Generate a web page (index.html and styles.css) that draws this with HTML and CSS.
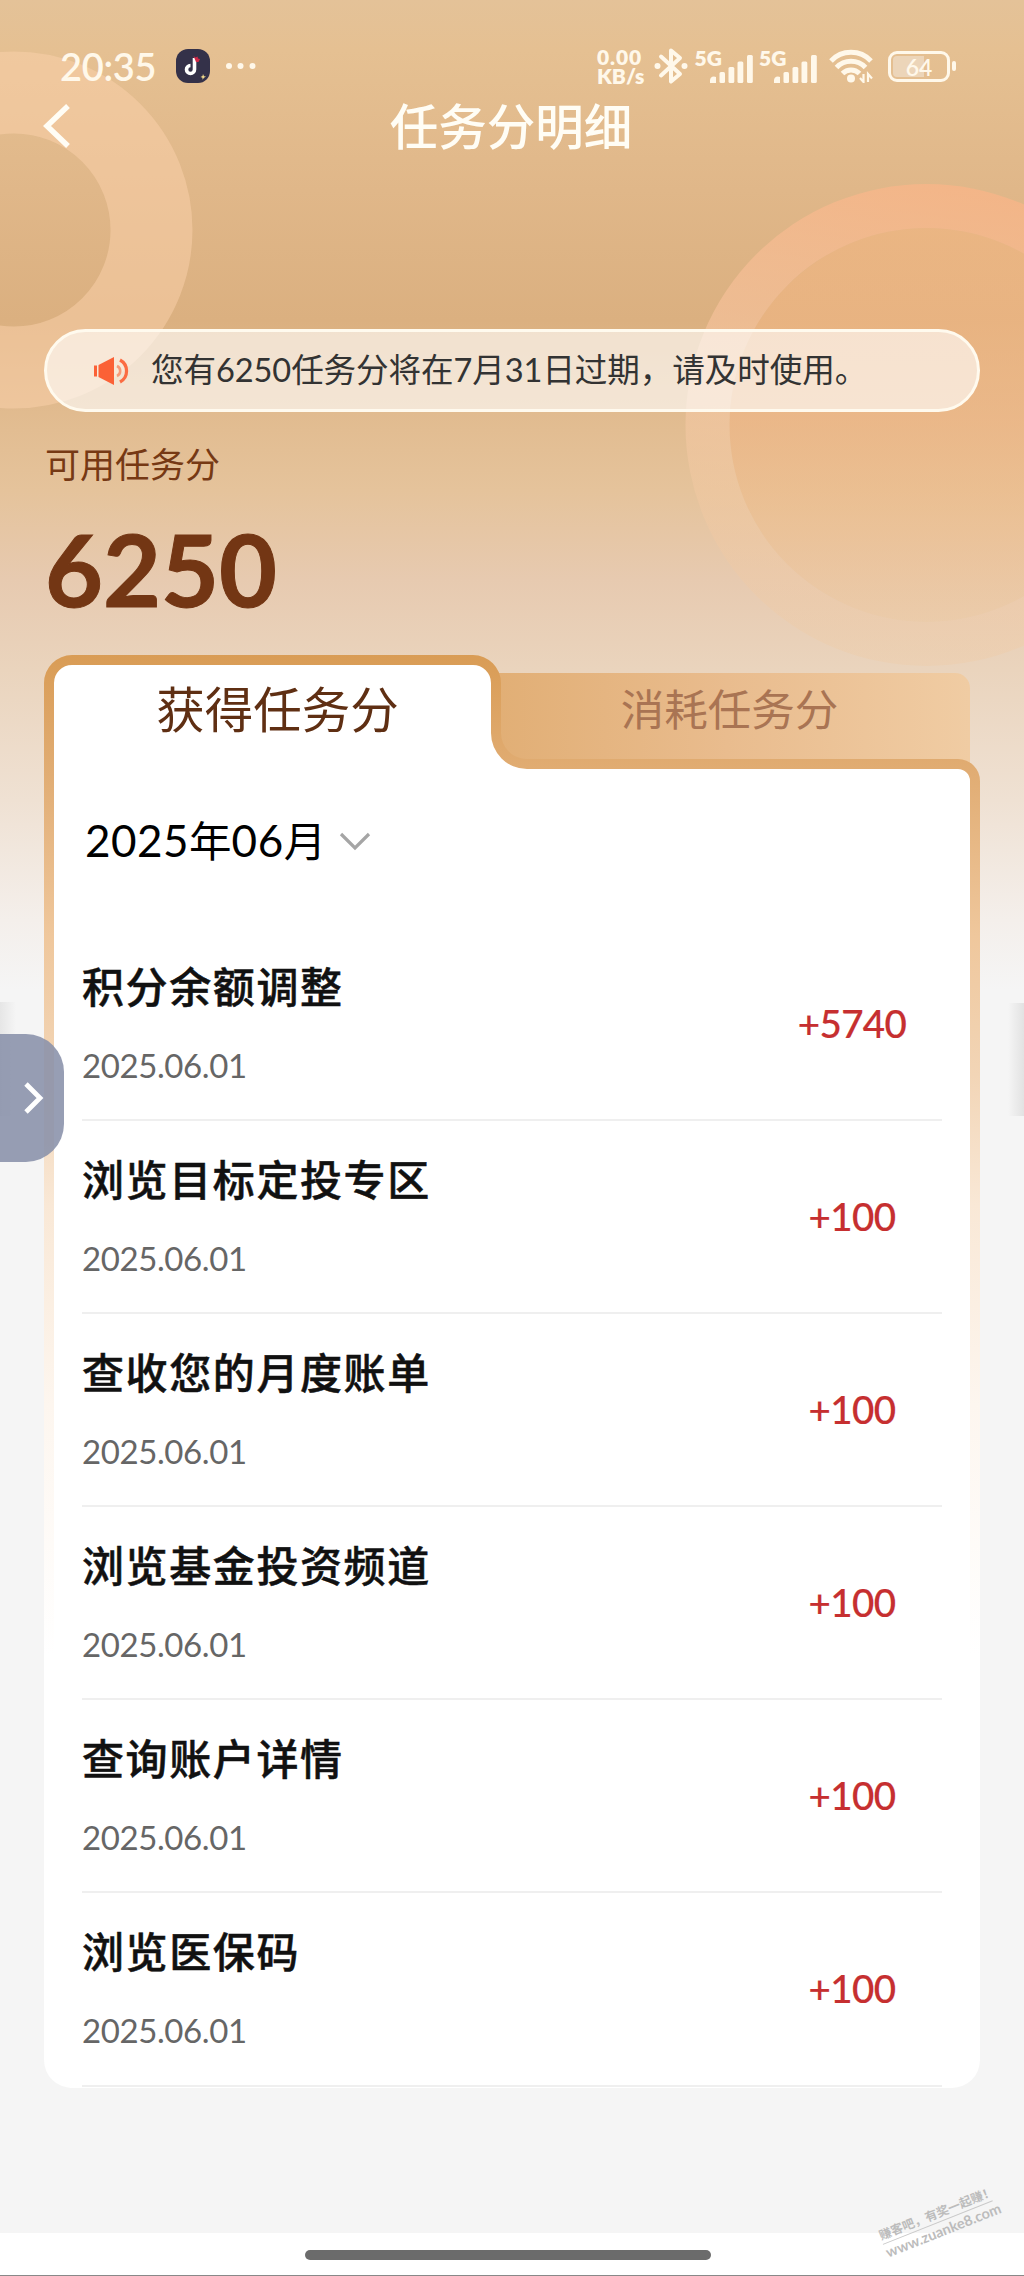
FILE: index.html
```html
<!DOCTYPE html>
<html lang="zh-CN">
<head>
<meta charset="utf-8">
<title>任务分明细</title>
<link rel="stylesheet" href="styles.css">
</head>
<body>
<div class="page">
  <svg class="rings" width="1024" height="700" viewBox="0 0 1024 700" aria-hidden="true">
    <defs>
      <linearGradient id="ring" x1="0.6" y1="0" x2="0.4" y2="1">
        <stop offset="0" stop-color="#ffb487" stop-opacity=".62"/>
        <stop offset=".5" stop-color="#fccdac" stop-opacity=".5"/>
        <stop offset="1" stop-color="#f0c89c" stop-opacity=".25"/>
      </linearGradient>
      <linearGradient id="disc" x1="0" y1="0" x2="0" y2="1">
        <stop offset="0" stop-color="#f2b681" stop-opacity=".6"/>
        <stop offset=".5" stop-color="#f0b584" stop-opacity=".6"/>
        <stop offset="1" stop-color="#f1c48f" stop-opacity=".3"/>
      </linearGradient>
    </defs>
    <circle cx="14" cy="230" r="137.5" fill="none" stroke="#fbd2ab" stroke-opacity=".5" stroke-width="82"/>
    <circle cx="926.5" cy="425" r="197" fill="url(#disc)"/>
    <path fill="url(#ring)" fill-rule="evenodd" d="M685.500 425a241 241 0 1 1 482 0a241 241 0 1 1-482 0ZM729.500 425a197 197 0 1 0 394 0a197 197 0 1 0-394 0Z"/>
  </svg>

  <header class="status">
    <span class="clock">20:35</span>
    <svg class="app" viewBox="0 0 34 34"><rect width="34" height="34" rx="12" fill="#343149"/><path d="M18.500 9v11.500a4 4 0 1 1-4-4" fill="none" stroke="#fff" stroke-width="3.600"/><path d="M17.500 7l2 1.500 2-1 .5 2 2 .5-1.500 3h-2.500z" fill="#cf2747"/><path d="M27 25l1 2.200 2 .2-2 1.300-1.500 2v-2l-2-.8 2-1z" fill="#f4dc8d"/></svg>
    <svg class="dots" viewBox="0 0 32 8"><g fill="#fff8ea"><circle cx="4" cy="4" r="3"/><circle cx="15.500" cy="4" r="3"/><circle cx="27.500" cy="4" r="3"/></g></svg>
    <span class="speed">0.00<br>KB/s</span>
    <svg class="bt" viewBox="0 0 34 38"><g fill="none" stroke="#fff8ea" stroke-width="4" stroke-linejoin="round" stroke-linecap="round"><path d="M7 9.500L26 27 17 34.500V3.500L26 11 7 28.500"/></g><circle cx="3.500" cy="19" r="3" fill="#fff8ea"/><circle cx="30.500" cy="19" r="3" fill="#fff8ea"/></svg>
    <span class="net"><b>5G</b><svg viewBox="0 0 44 28"><g fill="#fff8ea"><path d="M1 25a4 4 0 0 1 6-3v6H1z"/><rect x="10.500" y="17" width="5.500" height="11" rx="1.500"/><rect x="19.500" y="12" width="5.800" height="16" rx="1.500"/><rect x="28.500" y="6.500" width="5.800" height="21.500" rx="1.500"/><rect x="38" y="0" width="5.800" height="28" rx="1.500"/></g></svg></span>
    <span class="net"><b>5G</b><svg viewBox="0 0 44 28"><g fill="#fff8ea"><path d="M1 25a4 4 0 0 1 6-3v6H1z"/><rect x="10.500" y="17" width="5.500" height="11" rx="1.500"/><rect x="19.500" y="12" width="5.800" height="16" rx="1.500"/><rect x="28.500" y="6.500" width="5.800" height="21.500" rx="1.500"/><rect x="38" y="0" width="5.800" height="28" rx="1.500"/></g></svg></span>
    <svg class="wifi" viewBox="0 0 44 34"><g fill="none" stroke="#fff8ea" stroke-width="5"><path d="M2 12a27.500 27.500 0 0 1 40 0"/><path d="M7.500 18.500a20 20 0 0 1 29 0"/><path d="M13.500 24.500a12 12 0 0 1 17 0"/></g><circle cx="22" cy="29.500" r="4" fill="#fff8ea"/><path d="M34.500 25v8l-3.500-4M39 33v-8l4 4.500" fill="none" stroke="#fff8ea" stroke-width="2.200"/></svg>
    <span class="battery"><span class="cell">64</span><i></i></span>
  </header>

  <nav class="nav">
    <svg class="back" viewBox="0 0 28 44"><path d="M25 2L4 22l21 20" fill="none" stroke="#fffdf5" stroke-width="5.500"/></svg>
    <h1>任务分明细</h1>
  </nav>

  <div class="notice">
    <svg viewBox="0 0 36 30"><path d="M1 9.500h3v11H1zM5.500 9L21 1v28L5.500 21z" fill="#fb6136"/><path d="M24 10a5.500 5.500 0 0 1 0 10" fill="none" stroke="#f79a78" stroke-width="2.600"/><path d="M27 4a12.500 12.500 0 0 1 0 22" fill="none" stroke="#fb6c43" stroke-width="3.200"/></svg>
    <span>您有6250任务分将在7月31日过期，请及时使用。</span>
  </div>

  <div class="balance-label">可用任务分</div>
  <div class="balance">6250</div>

  <main class="card">
    <svg class="frame" width="936" height="1433" viewBox="0 0 936 1433" aria-hidden="true">
      <defs>
        <linearGradient id="edge" gradientUnits="userSpaceOnUse" x1="0" y1="0" x2="0" y2="1000">
          <stop offset="0" stop-color="#d99c55"/>
          <stop offset=".12" stop-color="#e1ad74"/>
          <stop offset=".28" stop-color="#efc79c"/>
          <stop offset=".42" stop-color="#f2d5b6"/>
          <stop offset=".55" stop-color="#f9e8d6"/>
          <stop offset=".75" stop-color="#fdf6ef"/>
          <stop offset="1" stop-color="#fff"/>
        </linearGradient>
        <linearGradient id="tab" x1="0" y1="0" x2="1" y2="0">
          <stop offset="0" stop-color="#e1ae74"/>
          <stop offset=".5" stop-color="#e9bc8e"/>
          <stop offset="1" stop-color="#f0cca3"/>
        </linearGradient>
      </defs>
      <path d="M440 18H911a15 15 0 0 1 15 15V114H440Z" fill="url(#tab)"/>
      <path d="M0 28A28 28 0 0 1 28 0H429A28 28 0 0 1 457 28V78A26 26 0 0 0 483 104H914A22 22 0 0 1 936 126V1405A28 28 0 0 1 908 1433H28A28 28 0 0 1 0 1405Z" fill="url(#edge)"/>
      <path d="M10 28A18 18 0 0 1 28 10H429A18 18 0 0 1 447 28V78A36 36 0 0 0 483 114H914A12 12 0 0 1 926 126V1405A28 28 0 0 1 908 1433H28A18 28 0 0 1 10 1405Z" fill="#fff"/>
    </svg>
    <div class="tabs"><div class="tab active">获得任务分</div><div class="tab">消耗任务分</div></div>
    <div class="month"><span><b>2025</b>年<b>06</b>月</span><svg viewBox="0 0 32 20"><path d="M2 2l14 14L30 2" fill="none" stroke="#a5a5a5" stroke-width="3.200"/></svg></div>
    <ul class="list">
      <li><div><h2>积分余额调整</h2><time>2025.06.01</time></div><strong>+5740</strong></li>
      <li><div><h2>浏览目标定投专区</h2><time>2025.06.01</time></div><strong>+100</strong></li>
      <li><div><h2>查收您的月度账单</h2><time>2025.06.01</time></div><strong>+100</strong></li>
      <li><div><h2>浏览基金投资频道</h2><time>2025.06.01</time></div><strong>+100</strong></li>
      <li><div><h2>查询账户详情</h2><time>2025.06.01</time></div><strong>+100</strong></li>
      <li><div><h2>浏览医保码</h2><time>2025.06.01</time></div><strong>+100</strong></li>
    </ul>
  </main>

  <footer class="home"><span></span></footer>

  <div class="shade left"></div>
  <div class="shade right"></div>
  <div class="handle"><svg viewBox="0 0 22 32"><path d="M3 2l14 14L3 30" fill="none" stroke="#fff" stroke-width="4.800"/></svg></div>
  <div class="watermark"><span class="wm-cn">赚客吧，有奖一起赚！</span><span class="wm-url">www.zuanke8.com</span></div>
</div>
</body>
</html>
```
FILE: styles.css
```css
* { box-sizing: border-box; margin: 0; padding: 0; }
body { background: #f5f5f5; font-family: Lato, "Noto Sans CJK SC", sans-serif; }
.page {
  position: relative;
  width: 1024px;
  height: 2276px;
  overflow: hidden;
  display: flex;
  flex-direction: column;
  background: linear-gradient(#e4c298 0, #e5c092 50px, #e0b789 190px, #dbb080 320px, #e2bd92 430px, #e5c39b 490px, #e7cab0 580px, #ead4bd 670px, #efe1d3 800px, #f4efeb 920px, #f5f5f5 990px);
}
.page > * { flex-shrink: 0; position: relative; }
.page > .rings { position: absolute; left: 0; top: 0; }

.status { height: 92px; padding: 40px 0 0 60px; display: flex; align-items: center; color: #fff8ea; }
.clock { width: 116px; font-size: 38px; font-weight: 600; line-height: 50px; letter-spacing: -.3px; }
.app { width: 34px; height: 34px; }
.dots { width: 32px; height: 8px; margin-left: 15px; }
.speed { width: 58px; margin-left: 340px; font-size: 21px; font-weight: 800; line-height: 19.5px; white-space: nowrap; }
.speed::first-line { letter-spacing: .9px; }
.bt { width: 34px; height: 38px; margin-left: -1px; }
.net { position: relative; display: flex; align-items: flex-end; justify-content: flex-end; width: 59px; height: 34px; margin-left: 5.5px; }
.net b { position: absolute; left: 1px; top: -3px; font-size: 21px; line-height: 24px; font-weight: 800; }
.net svg { width: 44px; height: 28px; }
.wifi { width: 44px; height: 34px; margin-left: 12px; }
.battery { display: flex; align-items: center; gap: 2px; margin-left: 15px; }
.cell { width: 62px; height: 31px; border: 3px solid #fff8ea; border-radius: 9px; background: linear-gradient(90deg, #ecd5b9 60%, transparent 60%) content-box; padding: 2px; text-align: center; font-size: 23px; font-weight: 600; line-height: 22px; }
.battery i { width: 4px; height: 10px; border-radius: 2px; background: #fff8ea; }

.nav { height: 237px; padding: 0 45px 0 43px; display: grid; grid-template-columns: 28px 1fr 28px; align-items: start; }
.back { width: 28px; height: 44px; margin-top: 12px; }
.nav h1 { text-align: center; font-size: 48.5px; line-height: 68px; font-weight: 500; color: #fffdf5; }

.notice { height: 83px; margin: 0 44px; padding: 0 0 2px 46px; border: 3px solid #fffaee; border-radius: 42px; background: rgba(255,255,255,.62); display: flex; align-items: center; }
.notice svg { width: 36px; height: 30px; margin-top: 2px; }
.notice span { margin-left: 22px; font-size: 32.6px; letter-spacing: -.1px; line-height: 48px; color: #333; white-space: nowrap; }

.balance-label { height: 90px; padding: 27px 0 0 45px; font-size: 35px; line-height: 50px; color: #763914; }
.balance { height: 153px; padding-left: 45px; font-size: 100px; line-height: 132px; font-weight: 700; color: #733614; -webkit-text-stroke: 1px #733614; }

.card { width: 936px; height: 1433px; margin-left: 44px; }
.frame { position: absolute; left: 0; top: 0; }
.tabs { position: relative; display: flex; height: 114px; }
.tab { width: 457px; padding-top: 18px; text-align: center; font-size: 43.5px; line-height: 72px; color: #a97453; }
.tab.active { padding-left: 10px; font-size: 48.5px; color: #5f2f13; }
.month { position: relative; display: flex; align-items: center; height: 159px; padding: 0 0 16px 41px; font-size: 42.5px; line-height: 60px; color: #000; }
.month b { font-weight: 400; font-size: 44px; letter-spacing: .5px; }
.month svg { width: 32px; height: 20px; margin: 3px 0 0 13px; }
.list { position: relative; list-style: none; margin: 0 38px; }
.list li { display: flex; justify-content: space-between; height: 193.1px; border-bottom: 2px solid #efefef; }
.list h2 { margin-top: 29px; font-size: 42px; font-weight: 500; letter-spacing: 1.6px; line-height: 60px; color: #111; white-space: nowrap; -webkit-text-stroke: .5px #111; }
.list time { display: block; margin-top: 28px; font-size: 33px; line-height: 40px; letter-spacing: -.4px; color: #666; }
.list strong { width: 180px; margin: 70px 0 0 0; text-align: center; font-size: 38.5px; line-height: 50px; font-weight: 500; color: #c62f30; letter-spacing: -.6px; -webkit-text-stroke: .2px #c62f30; }

.home { height: 43px; margin-top: 145px; padding-top: 17px; display: flex; justify-content: center; align-items: flex-start; background: #fff; border-bottom: 1px solid #888; }
.home span { width: 406px; height: 10px; margin-right: 8px; border-radius: 5px; background: #6b6b6b; }

.page > .shade { position: absolute; }
.page > .left { left: 0; top: 1002px; width: 16px; height: 114px; background: linear-gradient(90deg, #e6e6e6, #f5f5f500); }
.page > .right { right: 0; top: 1003px; width: 16px; height: 113px; background: linear-gradient(270deg, #e2e2e2, #f5f5f500); }
.page > .handle { position: absolute; left: 0; top: 1034px; width: 64px; height: 128px; border-radius: 0 38px 38px 0; background: rgba(137,145,170,.88); }
.handle svg { display: block; width: 22px; height: 32px; margin: 48px 0 0 23px; }
.page > .watermark { position: absolute; left: 879px; top: 2205px; width: 118px; transform: rotate(-21.7deg); display: flex; flex-direction: column; color: #bcbcbc; white-space: nowrap; font-weight: 700; }
.wm-cn { font-size: 12.3px; line-height: 17px; border-bottom: 1px solid #c9c9c9; }
.wm-url { font-size: 14.500px; line-height: 18px; }
```
